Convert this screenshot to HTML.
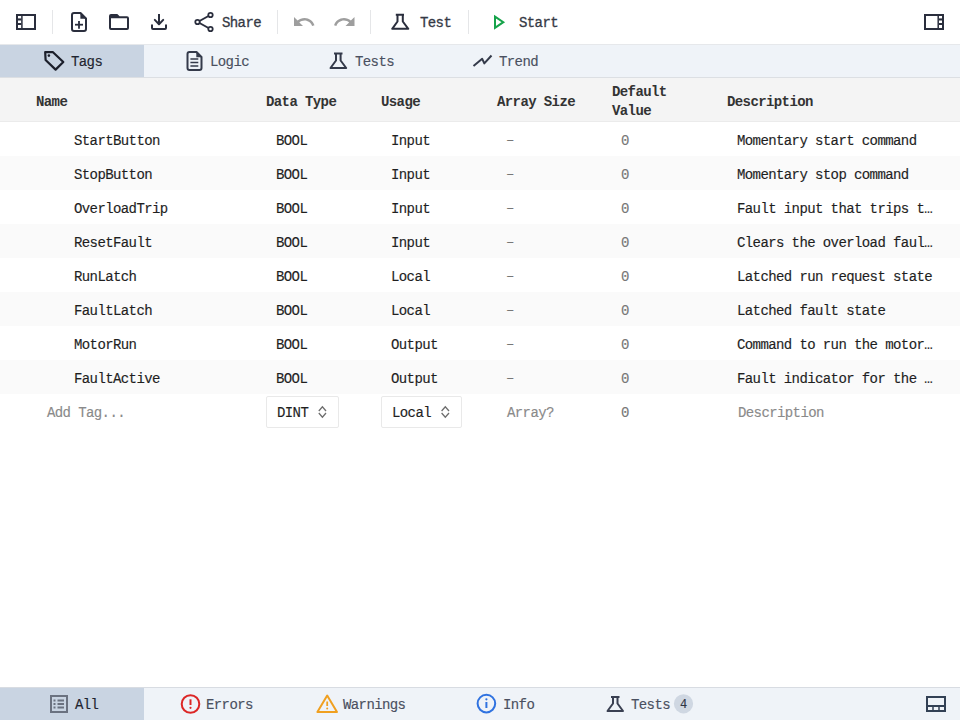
<!DOCTYPE html>
<html><head><meta charset="utf-8">
<style>
*{margin:0;padding:0;box-sizing:border-box}
html,body{width:960px;height:720px;overflow:hidden;background:#fff}
body{font-family:"Liberation Mono",monospace;font-size:14px;letter-spacing:-0.6px;color:#1f1f1f;position:relative}
.t{-webkit-text-stroke:0.15px currentColor}
.a{position:absolute}
.t{position:absolute;line-height:15px;white-space:nowrap}
#ic{position:absolute;left:0;top:0;width:960px;height:720px;overflow:visible}
#tb{left:0;top:0;width:960px;height:45px;background:#fff;border-bottom:1px solid #e6e8eb}
.sep{position:absolute;width:1px;background:#e5e6e8}
#tabs{left:0;top:45px;width:960px;height:33px;background:#eff3f8;border-bottom:1px solid #dcdfe3}
#tabact{left:0;top:45px;width:144px;height:32px;background:#c9d4e2}
#hdr{left:0;top:78px;width:960px;height:44px;background:#f4f4f4;border-bottom:1px solid #ebebeb}
.hd{font-weight:bold;color:#333;-webkit-text-stroke:0}
.tbt{color:#353945;-webkit-text-stroke:0.3px #353945}
.tab{color:#4a5060}
.row{position:absolute;left:0;width:960px;height:34px}
.alt{background:#fafafa}
.g{color:#777}
.ph{color:#8a8a8a}
.sel{position:absolute;top:396px;height:32px;border:1px solid #e9e9e9;border-radius:2px;background:#fff}
#sb{left:0;top:687px;width:960px;height:33px;background:#eff3f8;border-top:1px solid #d8dce2}
#sbact{left:0;top:688px;width:144px;height:32px;background:#c9d4e2}
.sbt{color:#4a5060}
</style></head><body>

<div id="tb" class="a"></div>
<div class="sep" style="left:52px;top:10px;height:24px"></div>
<div class="sep" style="left:277px;top:10px;height:24px"></div>
<div class="sep" style="left:370px;top:10px;height:24px"></div>
<div class="sep" style="left:468px;top:10px;height:24px"></div>
<div class="t tbt" style="left:222px;top:16px">Share</div>
<div class="t tbt" style="left:420px;top:16px">Test</div>
<div class="t tbt" style="left:519px;top:16px">Start</div>

<div id="tabs" class="a"></div>
<div id="tabact" class="a"></div>
<div class="t" style="left:71px;top:55px;color:#1f2430">Tags</div>
<div class="t tab" style="left:210px;top:55px">Logic</div>
<div class="t tab" style="left:355px;top:55px">Tests</div>
<div class="t tab" style="left:499px;top:55px">Trend</div>

<div id="hdr" class="a"></div>
<div class="t hd" style="left:36px;top:95px">Name</div>
<div class="t hd" style="left:266px;top:95px">Data Type</div>
<div class="t hd" style="left:381px;top:95px">Usage</div>
<div class="t hd" style="left:497px;top:95px">Array Size</div>
<div class="t hd" style="left:612px;top:85px">Default</div>
<div class="t hd" style="left:612px;top:104px">Value</div>
<div class="t hd" style="left:727px;top:95px">Description</div>

<div class="row" style="top:122px"></div>
<div class="t" style="left:74px;top:134px">StartButton</div>
<div class="t" style="left:276px;top:134px">BOOL</div>
<div class="t" style="left:391px;top:134px">Input</div>
<div class="t g" style="left:506px;top:134px;margin-top:-1px">–</div>
<div class="t g" style="left:621px;top:134px">0</div>
<div class="t" style="left:737px;top:134px">Momentary start command</div>
<div class="row alt" style="top:156px"></div>
<div class="t" style="left:74px;top:168px">StopButton</div>
<div class="t" style="left:276px;top:168px">BOOL</div>
<div class="t" style="left:391px;top:168px">Input</div>
<div class="t g" style="left:506px;top:168px;margin-top:-1px">–</div>
<div class="t g" style="left:621px;top:168px">0</div>
<div class="t" style="left:737px;top:168px">Momentary stop command</div>
<div class="row" style="top:190px"></div>
<div class="t" style="left:74px;top:202px">OverloadTrip</div>
<div class="t" style="left:276px;top:202px">BOOL</div>
<div class="t" style="left:391px;top:202px">Input</div>
<div class="t g" style="left:506px;top:202px;margin-top:-1px">–</div>
<div class="t g" style="left:621px;top:202px">0</div>
<div class="t" style="left:737px;top:202px">Fault input that trips t…</div>
<div class="row alt" style="top:224px"></div>
<div class="t" style="left:74px;top:236px">ResetFault</div>
<div class="t" style="left:276px;top:236px">BOOL</div>
<div class="t" style="left:391px;top:236px">Input</div>
<div class="t g" style="left:506px;top:236px;margin-top:-1px">–</div>
<div class="t g" style="left:621px;top:236px">0</div>
<div class="t" style="left:737px;top:236px">Clears the overload faul…</div>
<div class="row" style="top:258px"></div>
<div class="t" style="left:74px;top:270px">RunLatch</div>
<div class="t" style="left:276px;top:270px">BOOL</div>
<div class="t" style="left:391px;top:270px">Local</div>
<div class="t g" style="left:506px;top:270px;margin-top:-1px">–</div>
<div class="t g" style="left:621px;top:270px">0</div>
<div class="t" style="left:737px;top:270px">Latched run request state</div>
<div class="row alt" style="top:292px"></div>
<div class="t" style="left:74px;top:304px">FaultLatch</div>
<div class="t" style="left:276px;top:304px">BOOL</div>
<div class="t" style="left:391px;top:304px">Local</div>
<div class="t g" style="left:506px;top:304px;margin-top:-1px">–</div>
<div class="t g" style="left:621px;top:304px">0</div>
<div class="t" style="left:737px;top:304px">Latched fault state</div>
<div class="row" style="top:326px"></div>
<div class="t" style="left:74px;top:338px">MotorRun</div>
<div class="t" style="left:276px;top:338px">BOOL</div>
<div class="t" style="left:391px;top:338px">Output</div>
<div class="t g" style="left:506px;top:338px;margin-top:-1px">–</div>
<div class="t g" style="left:621px;top:338px">0</div>
<div class="t" style="left:737px;top:338px">Command to run the motor…</div>
<div class="row alt" style="top:360px"></div>
<div class="t" style="left:74px;top:372px">FaultActive</div>
<div class="t" style="left:276px;top:372px">BOOL</div>
<div class="t" style="left:391px;top:372px">Output</div>
<div class="t g" style="left:506px;top:372px;margin-top:-1px">–</div>
<div class="t g" style="left:621px;top:372px">0</div>
<div class="t" style="left:737px;top:372px">Fault indicator for the …</div>

<div class="t ph" style="left:47px;top:406px">Add Tag...</div>
<div class="sel" style="left:266px;width:73px"></div>
<div class="t" style="left:277px;top:406px">DINT</div>
<div class="sel" style="left:381px;width:81px"></div>
<div class="t" style="left:392px;top:406px">Local</div>
<div class="t ph" style="left:507px;top:406px">Array?</div>
<div class="t g" style="left:621px;top:406px">0</div>
<div class="t ph" style="left:738px;top:406px">Description</div>

<div id="sb" class="a"></div>
<div id="sbact" class="a"></div>
<div class="t" style="left:75px;top:698px;color:#1f2430">All</div>
<div class="t sbt" style="left:206px;top:698px">Errors</div>
<div class="t sbt" style="left:343px;top:698px">Warnings</div>
<div class="t sbt" style="left:503px;top:698px">Info</div>
<div class="t sbt" style="left:631px;top:698px">Tests</div>

<svg id="ic" width="960" height="720" viewBox="0 0 960 720">
<g fill="none" stroke="#2a2e3d" stroke-width="2">
  <!-- sidebar left -->
  <rect x="17" y="15" width="18" height="14"/>
  <line x1="21.9" y1="15" x2="21.9" y2="29" stroke-width="1.5"/>
  <!-- new file -->
  <path d="M80.5,13 H74 Q72,13 72,15 V29 Q72,31 74,31 H84 Q86,31 86,29 V18.5 Z" stroke-linejoin="round"/>
  <line x1="75" y1="24.7" x2="83" y2="24.7" stroke-width="1.8"/>
  <line x1="79" y1="21" x2="79" y2="28.7" stroke-width="1.8"/>
  <!-- download -->
  <line x1="159" y1="14" x2="159" y2="24"/>
  <polyline points="154.8,19.9 159,24.2 163.2,19.9" stroke-linecap="round" stroke-linejoin="round"/>
  <path d="M152,25.3 V28 Q152,29 153,29 H165 Q166,29 166,28 V25.3" stroke-linecap="round"/>
  <!-- share -->
  <circle cx="197.5" cy="22" r="2.2" stroke-width="1.8"/>
  <circle cx="210.5" cy="15" r="2.2" stroke-width="1.8"/>
  <circle cx="210.5" cy="29" r="2.2" stroke-width="1.8"/>
  <line x1="199.5" y1="21" x2="208.5" y2="16"/>
  <line x1="199.5" y1="23" x2="208.5" y2="28"/>
  <!-- flask -->
  <path d="M395.8,14.8 H404 M397.5,15 V21.5 L392.2,28.8 H408.3 L402.8,21.5 V15" stroke-linejoin="round"/>
  <!-- right sidebar -->
  <rect x="925" y="15" width="18" height="14"/>
  <line x1="938.2" y1="15" x2="938.2" y2="29" stroke-width="1.5"/>
</g>
<g fill="#2a2e3d">
  <rect x="18" y="18.4" width="3.3" height="2.1"/>
  <rect x="18" y="23" width="3.3" height="2"/>
  <rect x="939" y="18.4" width="3.3" height="2.1"/>
  <rect x="939" y="23" width="3.3" height="2"/>
  <path d="M80.4,12.5 L86.6,18.7 H80.4 Z"/>
  <!-- folder -->
  <path fill-rule="evenodd" d="M109,16 Q109,14 111,14 H117.3 L119.6,16.2 H127 Q129,16.2 129,18.2 V28 Q129,30 127,30 H111 Q109,30 109,28 Z M111,18.2 H127 V28 H111 Z"/>
</g>
<g fill="#9e9e9e">
  <path transform="translate(292,10)" d="M12.5 8c-2.65 0-5.05.99-6.9 2.6L2 7v9h9l-3.62-3.62c1.39-1.16 3.16-1.88 5.12-1.88 3.54 0 6.55 2.31 7.6 5.5l2.37-.78C21.08 11.03 17.15 8 12.5 8z"/>
  <path transform="translate(332.5,10)" d="M18.4 10.6C16.55 8.99 14.15 8 11.5 8c-4.65 0-8.58 3.03-9.96 7.22L3.9 16c1.05-3.19 4.05-5.5 7.6-5.5 1.95 0 3.73.72 5.12 1.88L13 16h9V7l-3.6 3.6z"/>
</g>
<!-- play -->
<path d="M495,16.6 L503.3,22.2 L495,27.8 Z" fill="none" stroke="#16a34a" stroke-width="2" stroke-linejoin="miter"/>

<!-- tabs icons -->
<g fill="none" stroke="#1c1f2b" stroke-width="2.2" stroke-linejoin="round">
  <path d="M45.2,52.2 H53 L63.3,62 L55.6,69.6 L45.6,60 Z"/>
</g>
<circle cx="48.9" cy="55.6" r="1.3" fill="#1c1f2b"/>
<g fill="none" stroke="#343a4a" stroke-width="2" stroke-linejoin="round">
  <path d="M196.5,52 H189.5 Q187.5,52 187.5,54 V68 Q187.5,70 189.5,70 H199.5 Q201.5,70 201.5,68 V57 Z"/>
  <line x1="190.4" y1="59" x2="198.3" y2="59" stroke-width="1.5"/>
  <line x1="190.4" y1="62.5" x2="198.3" y2="62.5" stroke-width="1.5"/>
  <line x1="190.4" y1="66" x2="198.3" y2="66" stroke-width="1.5"/>
  <path d="M334,53.5 H342.5 M336,53.8 V60.5 L330.5,68 H346.2 L340.6,60.5 V53.8"/>
  <polyline points="473.5,66 482.2,58.8 484.3,63.4 491.5,55.5"/>
</g>
<path d="M196.3,51.5 L202,57.2 H196.3 Z" fill="#343a4a"/>

<!-- select chevrons -->
<g fill="none" stroke="#6e6e6e" stroke-width="1.3">
  <polyline points="318.8,411 322.4,406.8 326,411"/>
  <polyline points="318.8,413 322.4,417.2 326,413"/>
  <polyline points="441.6,411 445.3,406.8 449,411"/>
  <polyline points="441.6,413 445.3,417.2 449,413"/>
</g>

<!-- status bar icons -->
<g fill="none" stroke="#6b7280" stroke-width="2">
  <rect x="51" y="696" width="16" height="16"/>
</g>
<g fill="#6b7280">
  <rect x="53.5" y="699.5" width="2" height="2"/><rect x="57.5" y="699.5" width="6.5" height="2"/>
  <rect x="53.5" y="703" width="2" height="2"/><rect x="57.5" y="703" width="6.5" height="2"/>
  <rect x="53.5" y="706.5" width="2" height="2"/><rect x="57.5" y="706.5" width="6.5" height="2"/>
</g>
<circle cx="190.5" cy="704" r="8.8" fill="none" stroke="#dc2626" stroke-width="2"/>
<line x1="190.5" y1="699.3" x2="190.5" y2="705" stroke="#dc2626" stroke-width="2"/>
<circle cx="190.5" cy="707.8" r="1.1" fill="#dc2626"/>
<path d="M327.2,695.5 L337,712 H317.4 Z" fill="none" stroke="#f0a020" stroke-width="2" stroke-linejoin="round"/>
<line x1="327.2" y1="701.5" x2="327.2" y2="706" stroke="#f0a020" stroke-width="1.8"/>
<circle cx="327.2" cy="708.5" r="1" fill="#f0a020"/>
<circle cx="486.4" cy="703.6" r="8.8" fill="none" stroke="#2f72e0" stroke-width="2"/>
<line x1="486.4" y1="702" x2="486.4" y2="708" stroke="#2f72e0" stroke-width="2"/>
<circle cx="486.4" cy="699.3" r="1.1" fill="#2f72e0"/>
<path d="M611,697 H619.5 M613,697.3 V703.5 L607.5,711 H623 L617.5,703.5 V697.3" fill="none" stroke="#3a4052" stroke-width="2" stroke-linejoin="round"/>
<circle cx="683.5" cy="703.8" r="9.6" fill="#cfd7e2"/>
<g fill="none" stroke="#334155" stroke-width="2">
  <rect x="927" y="697" width="18" height="14"/>
  <line x1="927" y1="706" x2="945" y2="706"/>
  <line x1="933" y1="706" x2="933" y2="711" stroke-width="1.5"/>
  <line x1="939" y1="706" x2="939" y2="711" stroke-width="1.5"/>
</g>
</svg>
<div class="t" style="left:680px;top:698px;color:#2f3545;font-size:12px">4</div>
</body></html>
